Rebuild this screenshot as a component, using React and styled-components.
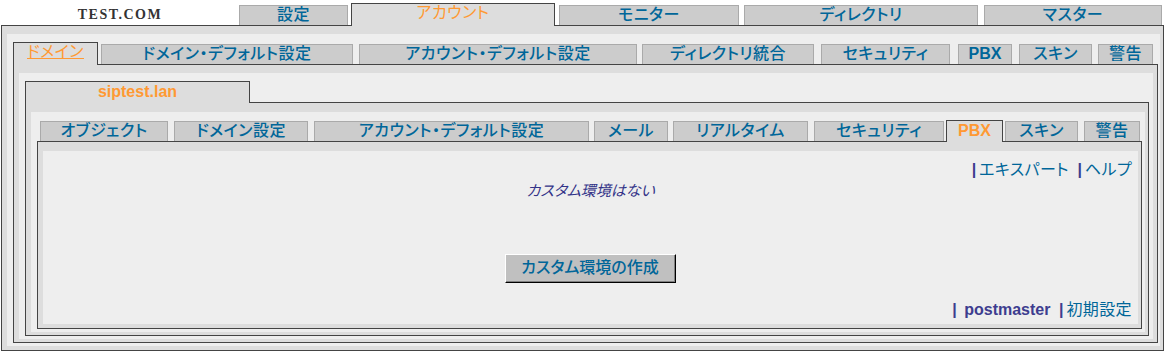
import React from "react";
import styled, { createGlobalStyle, css } from "styled-components";

const GlobalStyle = createGlobalStyle`
  html, body { margin: 0; padding: 0; background: #fff; }
  body { font-family: "Liberation Sans", "Noto Sans CJK JP", sans-serif; }
`;

const Page = styled.div`
  width: 1163px;
  margin-left: 1px;
  font-family: "Liberation Sans", "Noto Sans CJK JP", sans-serif;
  font-feature-settings: "palt";
`;

const TabRow = styled.div`
  display: flex;
  align-items: flex-end;
  position: relative;
  z-index: 1;
  ${(p) => p.$h && css`height: ${p.$h}px;`}
`;

const Brand = styled.div`
  width: 238px;
  align-self: stretch;
  display: flex;
  align-items: center;
  justify-content: center;
  padding-top: 5px;
  box-sizing: border-box;
  font-family: "Liberation Serif", serif;
  font-weight: bold;
  font-size: 14px;
  letter-spacing: 1.5px;
  color: #333;
`;

const Tab = styled.div`
  box-sizing: border-box;
  flex: none;
  width: ${(p) => p.$w}px;
  margin-left: ${(p) => p.$gap}px;
  height: 20px;
  padding-bottom: 2px;
  border: 1px solid #aaa;
  border-bottom: none;
  background: #ccc;
  color: #006699;
  font-size: 16px;
  line-height: 18px;
  letter-spacing: ${(p) => (p.$latin ? 0 : 0.5)}px;
  font-weight: ${(p) => (p.$thin ? "normal" : p.$latin ? "bold" : 500)};
  display: flex;
  align-items: center;
  justify-content: center;
  white-space: nowrap;
  ${(p) =>
    p.$active &&
    css`
      height: ${21 + p.$lift}px;
      padding-bottom: ${p.$pb}px;
      margin-bottom: -1px;
      border-color: #444;
      background: #ddd;
      color: #f93;
    `}
  ${(p) => p.$underline && css`text-decoration: underline;`}
`;

const Box = styled.div`
  border: 1px solid #444;
  background: #ddd;
  padding: ${(p) => p.$pad};
`;

const Inner = styled.div`
  background: #eee;
  padding: ${(p) => p.$pad};
`;

const Content = styled.div`
  background: #eee;
  height: 173px;
  box-sizing: border-box;
  padding: 9px 6px 5px 6px;
  display: flex;
  flex-direction: column;
  font-size: 16px;
  line-height: 20px;
`;

const LinkRow = styled.div`
  height: 20px;
  text-align: right;
  white-space: nowrap;
`;

const Sep = styled.span`
  font-weight: bold;
  color: #3d3d8f;
  margin: 0 3px 0 4px;
`;

const Link = styled.span`
  color: #006699;
  letter-spacing: 0.4px;
`;

const User = styled.span`
  font-weight: bold;
  color: #3d3d8f;
`;

const Message = styled.div`
  height: 20px;
  text-align: center;
  font-style: italic;
  font-size: 15px;
  color: #333388;
  padding-top: 1px;
`;

const ButtonRow = styled.div`
  margin-top: 53px;
  display: flex;
  justify-content: center;
  padding-right: 1px;
`;

const Button = styled.button`
  box-sizing: border-box;
  width: 171px;
  height: 29px;
  padding: 0 0 2px;
  background: #c0c0c0;
  border: 1px solid;
  border-color: #fff #000 #000 #fff;
  box-shadow: inset -1px -1px 0 #808080;
  color: #006699;
  font-family: "Liberation Sans", "Noto Sans CJK JP", sans-serif;
  font-feature-settings: "palt";
  font-size: 16px;
  font-weight: 500;
  line-height: 20px;
  cursor: pointer;
`;

const FootRow = styled(LinkRow)`
  margin-top: 17px;
`;

const topTabs = [
  { label: "設定", w: 109, gap: 0 },
  { label: "アカウント", w: 204, gap: 3, active: true, thin: true, lift: 2, pb: 5 },
  { label: "モニター", w: 180, gap: 4 },
  { label: "ディレクトリ", w: 234, gap: 5 },
  { label: "マスター", w: 178, gap: 6 },
];

const domainTabs = [
  { label: "ドメイン", w: 85, gap: 0, active: true, thin: true, underline: true, lift: 2, pb: 4 },
  { label: "ドメイン・デフォルト設定", w: 252, gap: 3 },
  { label: "アカウント・デフォルト設定", w: 278, gap: 6 },
  { label: "ディレクトリ統合", w: 172, gap: 5 },
  { label: "セキュリティ", w: 129, gap: 7 },
  { label: "PBX", w: 54, gap: 8, latin: true },
  { label: "スキン", w: 73, gap: 7 },
  { label: "警告", w: 55, gap: 6 },
];

const siteTabs = [
  { label: "siptest.lan", w: 225, gap: 0, active: true, latin: true, lift: 1, pb: 1 },
];

const objectTabs = [
  { label: "オブジェクト", w: 128, gap: 3 },
  { label: "ドメイン設定", w: 134, gap: 6 },
  { label: "アカウント・デフォルト設定", w: 275, gap: 6 },
  { label: "メール", w: 74, gap: 5 },
  { label: "リアルタイム", w: 135, gap: 5 },
  { label: "セキュリティ", w: 130, gap: 6 },
  { label: "PBX", w: 57, gap: 2, active: true, latin: true, lift: 1, pb: 2 },
  { label: "スキン", w: 73, gap: 2 },
  { label: "警告", w: 56, gap: 6 },
];

function Tabs({ items }) {
  return items.map((t) => (
    <Tab
      key={t.label}
      $w={t.w}
      $gap={t.gap}
      $active={t.active}
      $thin={t.thin}
      $latin={t.latin}
      $underline={t.underline}
      $lift={t.lift}
      $pb={t.pb}
    >
      {t.label}
    </Tab>
  ));
}

export default function App() {
  return (
    <>
      <GlobalStyle />
      <Page>
        <TabRow $h={25}>
          <Brand>TEST.COM</Brand>
          <Tabs items={topTabs} />
        </TabRow>
        <Box $pad="8px 3px 4px 5px">
          <Inner $pad="8px 2px 3px 6px">
            <TabRow>
              <Tabs items={domainTabs} />
            </TabRow>
            <Box $pad="8px 4px 3px 5px">
              <Inner $pad="8px 4px 3px 6px">
                <TabRow>
                  <Tabs items={siteTabs} />
                </TabRow>
                <Box $pad="9px 3px 3px 5px">
                  <Inner $pad="8px 3px 3px 6px">
                    <TabRow>
                      <Tabs items={objectTabs} />
                    </TabRow>
                    <Box $pad="9px 3px 4px 5px">
                      <Content>
                        <LinkRow>
                          <Sep>|</Sep>
                          <Link>エキスパート</Link> <Sep>|</Sep>
                          <Link>ヘルプ</Link>
                        </LinkRow>
                        <Message>カスタム環境はない</Message>
                        <ButtonRow>
                          <Button type="button">カスタム環境の作成</Button>
                        </ButtonRow>
                        <FootRow>
                          <Sep>|</Sep> <User>postmaster</User> <Sep>|</Sep>
                          <Link>初期設定</Link>
                        </FootRow>
                      </Content>
                    </Box>
                  </Inner>
                </Box>
              </Inner>
            </Box>
          </Inner>
        </Box>
      </Page>
    </>
  );
}
